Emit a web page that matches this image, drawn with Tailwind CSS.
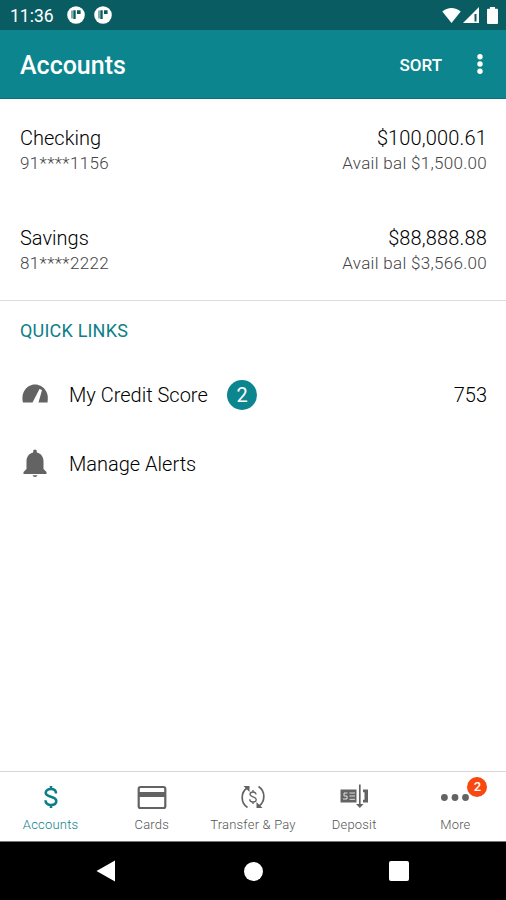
<!DOCTYPE html>
<html lang="en">
<head>
  <meta charset="UTF-8" />
  <meta name="viewport" content="width=device-width, initial-scale=1.0"/>
  <title>Accounts</title>
  <script src="https://cdn.jsdelivr.net/npm/@tailwindcss/browser@4"></script>
</head>
<body class="bg-white h-[900px] flex flex-col overflow-hidden font-[Roboto,sans-serif] text-black">

  <!-- Status bar -->
  <div class="h-[30px] shrink-0 bg-[#0a5c63] text-white flex items-center pl-2.5 pr-[8px]">
    <span class="w-[57px] text-[17.5px] leading-none pt-[3px]">11:36</span>
    <svg class="w-[18px] h-[18px] mr-[9px]" viewBox="0 0 18 18">
      <circle cx="9" cy="9" r="8.8" fill="#fff"/>
      <path d="M4.500 4.500h1v8h-1zM6.300 4.300h2.400v8.700H6.300zM10 4.300h3.600v3.700H10z" fill="#0a5c63"/>
    </svg>
    <svg class="w-[18px] h-[18px]" viewBox="0 0 18 18">
      <circle cx="9" cy="9" r="8.8" fill="#fff"/>
      <path d="M4.500 4.500h1v8h-1zM6.300 4.300h2.400v8.700H6.300zM10 4.300h3.600v3.700H10z" fill="#0a5c63"/>
    </svg>
    <svg class="w-[19px] h-[17px] ml-auto" viewBox="0 0 19 17">
      <path d="M.3 4.500C5.500-.3 13.500-.3 18.700 4.500L9.500 16z" fill="#fff"/>
    </svg>
    <svg class="w-4 h-4 ml-0.5" viewBox="0 0 16 16">
      <path d="M0 16L16 0v16z" fill="#fff"/>
      <path d="M11.500 7v7.500h2V7z" fill="#0a5c63"/>
    </svg>
    <svg class="w-[11px] h-[17px] ml-2" viewBox="0 0 11 17">
      <path d="M3 0h5v1.800h2q1 0 1 1V16q0 1-1 1H1q-1 0-1-1V2.800q0-1 1-1h2z" fill="#fff"/>
    </svg>
  </div>

  <!-- App bar -->
  <header class="h-[69px] shrink-0 bg-[#0d858f] border-b border-[#0a7079] text-white flex items-center pl-5 pr-[23px]">
    <h1 class="text-[25px] font-medium leading-none pt-[3px]">Accounts</h1>
    <button class="ml-auto text-[17px] font-medium leading-none pt-0.5">SORT</button>
    <svg class="w-[6px] h-5 ml-[35px]" viewBox="0 0 6 20" fill="#fff">
      <circle cx="3" cy="2.700" r="2.700"/>
      <circle cx="3" cy="10" r="2.700"/>
      <circle cx="3" cy="17.300" r="2.700"/>
    </svg>
  </header>

  <!-- Account list -->
  <main class="grow">
    <section class="h-[202px] border-b border-[#dcdcdc] pl-5 pr-[19px] pt-[26px] font-light">
      <div class="h-[100px] flex justify-between">
        <div>
          <p class="text-[20px] leading-[26px]">Checking</p>
          <p class="text-[17px] leading-[25px] tracking-[0.37px] text-[#444]">91****1156</p>
        </div>
        <div class="text-right">
          <p class="text-[20px] leading-[26px] tracking-[0.15px]">$100,000.61</p>
          <p class="text-[17px] leading-[25px] tracking-[0.3px] text-[#444]">Avail bal $1,500.00</p>
        </div>
      </div>
      <div class="flex justify-between">
        <div>
          <p class="text-[20px] leading-[26px]">Savings</p>
          <p class="text-[17px] leading-[25px] tracking-[0.37px] text-[#444]">81****2222</p>
        </div>
        <div class="text-right">
          <p class="text-[20px] leading-[26px] tracking-[0.15px]">$88,888.88</p>
          <p class="text-[17px] leading-[25px] tracking-[0.3px] text-[#444]">Avail bal $3,566.00</p>
        </div>
      </div>
    </section>

    <!-- Quick links -->
    <section class="pl-5 pr-[19px] pt-[17px]">
      <h2 class="text-[18px] leading-[26px] tracking-[0.2px] text-[#0d7f88]">QUICK LINKS</h2>
      <a class="h-[69px] mt-4 flex items-center text-[20px] font-light">
        <svg class="w-[30px] h-[30px]" viewBox="0 0 30 30">
          <path d="M3 22.500C.5 11 8 4.500 15 4.500S30 11 27.500 22.500H18.500L22 10 19.500 9 12.500 22.500z" fill="#636363"/>
        </svg>
        <span class="ml-[19px] w-[138px] whitespace-nowrap">My Credit Score</span>
        <span class="ml-5 w-[30px] h-[30px] rounded-full bg-[#0d858f] text-white font-normal flex items-center justify-center">2</span>
        <span class="ml-auto">753</span>
      </a>
      <a class="h-[69px] flex items-center text-[20px] font-light">
        <svg class="w-[30px] h-[30px]" viewBox="0 0 30 30" fill="#636363">
          <path d="M15 .5c1.200 0 1.800.8 1.800 2v1c4.500 1 6.700 4.500 6.700 9V20l3 3v2H3.500v-2l3-3v-7.500c0-4.500 2.200-8 6.700-9v-1c0-1.200.6-2 1.800-2z"/>
          <path d="M12.500 26.300h5q-.5 1.700-2.500 1.700t-2.500-1.700z"/>
        </svg>
        <span class="ml-[19px]">Manage Alerts</span>
      </a>
    </section>
  </main>

  <!-- Bottom tabs -->
  <nav class="h-[70px] shrink-0 border-t border-[#d8d8d8] grid grid-cols-5 text-[13px] tracking-[0.2px] text-[#555] font-light">
    <a class="flex flex-col items-center pt-[11px] text-[#0d7f88]">
      <svg class="w-7 h-7" viewBox="0 0 28 28" fill="none" stroke="#0d7f88" stroke-width="2.600">
        <path d="M19 10.500C19 7.500 17 6 14 6S8.700 7.500 8.700 9.800C8.700 15 19.300 12.500 19.300 18c0 2.500-2.100 4-5.300 4s-5.500-1.700-5.500-4.700M14 3v3M14 22v3"/>
      </svg>
      <span class="mt-[5px] leading-[18px]">Accounts</span>
    </a>
    <a class="flex flex-col items-center pt-[11px]">
      <svg class="w-[30px] h-7" viewBox="0 0 30 28">
        <rect x="1.700" y="4" width="26.600" height="21" rx="1.800" fill="none" stroke="#636363" stroke-width="2.200"/>
        <path d="M2 9h26v5H2z" fill="#636363"/>
      </svg>
      <span class="mt-[5px] leading-[18px]">Cards</span>
    </a>
    <a class="flex flex-col items-center pt-[11px] whitespace-nowrap">
      <svg class="w-7 h-7" viewBox="0 0 28 28" fill="none" stroke="#636363" stroke-width="1.700">
        <path d="M8.500 24.500C1.500 20 1.500 9.500 8 5M19.500 3.500C26.500 8 26.500 18.500 20 23"/>
        <path d="M4.500 3h6v6zM23.500 25h-6v-6z" fill="#636363" stroke="none"/>
        <path d="M17 11.500C17 9.800 15.800 9 14 9s-3 .9-3 2.300c0 3.200 6.200 1.900 6.200 5.200 0 1.600-1.300 2.500-3.200 2.500s-3.300-1-3.300-2.700M14 7v2M14 19v2" stroke-width="1.300"/>
      </svg>
      <span class="mt-[5px] leading-[18px]">Transfer &amp; Pay</span>
    </a>
    <a class="flex flex-col items-center pt-[11px]">
      <svg class="w-7 h-7" viewBox="0 0 28 28">
        <path d="M.5 6.500h16v13H.5z" fill="#636363"/>
        <path d="M7.500 10H4v3h3v3H3M9.500 10H15M9.500 13H15M9.500 16.300H15" fill="none" stroke="#fff" stroke-width=".8"/>
        <path d="M19.800 1.500V22" stroke="#636363" stroke-width="1.700"/>
        <path d="M16 21h7.600L19.800 25z" fill="#636363"/>
        <path d="M23 6.500h5v13h-5v-2.800h1.500V9.300H23z" fill="#636363"/>
      </svg>
      <span class="mt-[5px] leading-[18px]">Deposit</span>
    </a>
    <a class="flex flex-col items-center pt-[11px]">
      <span class="relative h-7">
        <svg class="w-7 h-7" viewBox="0 0 28 28" fill="#636363">
          <circle cx="3.400" cy="14.500" r="3.400"/>
          <circle cx="14" cy="14.500" r="3.400"/>
          <circle cx="24.500" cy="14.500" r="3.400"/>
        </svg>
        <span class="absolute left-[26px] -top-[6px] w-5 h-5 rounded-full bg-[#f8480f] text-white text-[13px] font-medium tracking-normal flex items-center justify-center">2</span>
      </span>
      <span class="mt-[5px] leading-[18px]">More</span>
    </a>
  </nav>

  <!-- System navigation -->
  <div class="h-[59px] shrink-0 bg-black border-t border-[#777] flex items-center justify-between pl-24 pr-[97px]">
    <svg class="w-5 h-[22px]" viewBox="0 0 20 22"><path d="M.5 11L19 .5v21z" fill="#fff"/></svg>
    <span class="w-[19px] h-[19px] ml-px rounded-full bg-white"></span>
    <span class="w-5 h-5 rounded-[2px] bg-white"></span>
  </div>

</body>
</html>
